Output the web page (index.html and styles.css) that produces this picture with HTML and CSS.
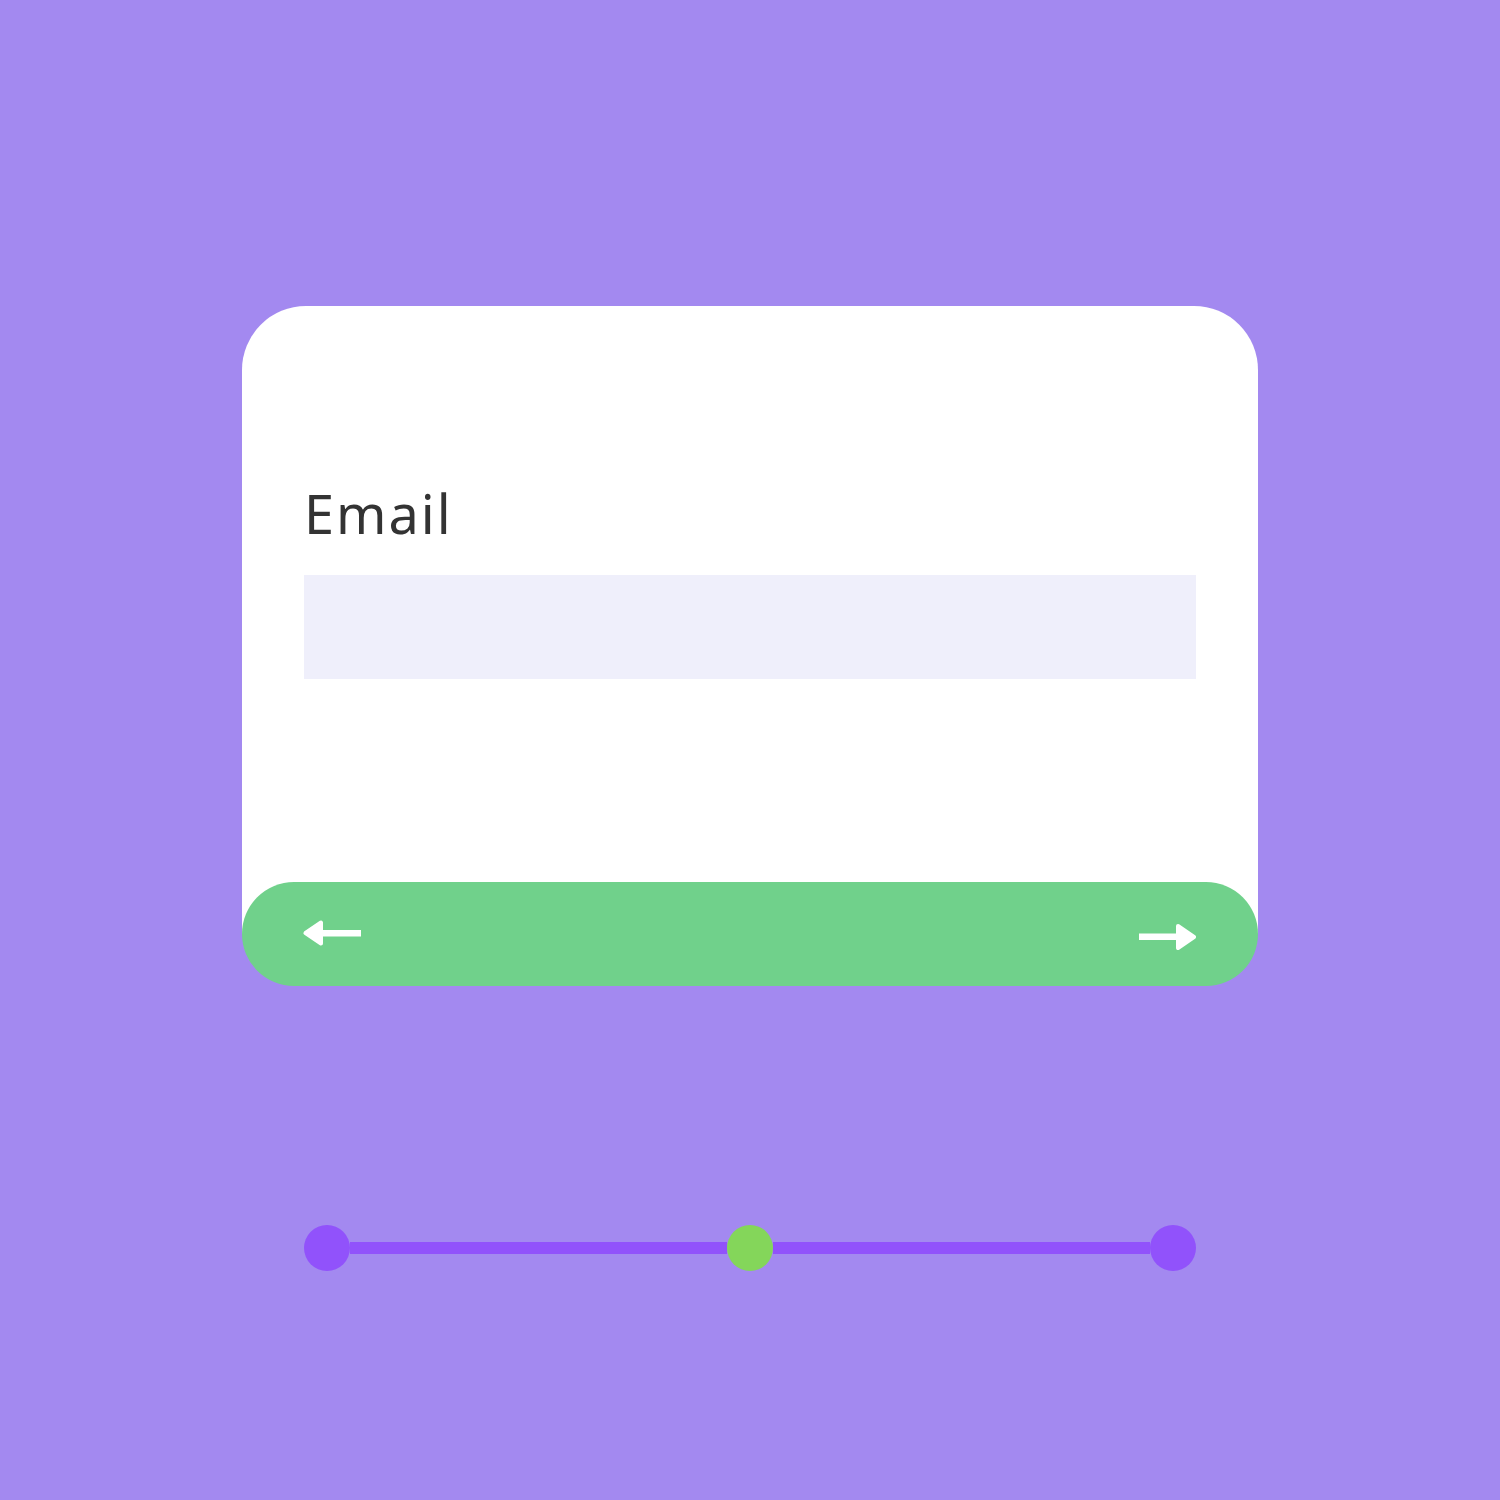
FILE: index.html
```html
<!DOCTYPE html>
<html lang="en">
<head>
<meta charset="utf-8">
<title>Email step</title>
<link rel="stylesheet" href="styles.css">
</head>
<body>
<main class="stage">
  <section class="card">
    <div class="card-body">
      <label class="field-label" for="email">Email</label>
      <div class="field-input" id="email"></div>
    </div>
    <div class="card-footer">
      <svg class="arrow arrow-left" width="58" height="30" viewBox="0 0 58 30" aria-hidden="true">
        <polygon points="2.5,15 18,4.5 18,25.5" fill="#fff" stroke="#fff" stroke-width="4" stroke-linejoin="round"/>
        <rect x="17" y="12" width="41" height="6.5" fill="#fff"/>
      </svg>
      <svg class="arrow arrow-right" width="58" height="30" viewBox="0 0 58 30" aria-hidden="true">
        <rect x="1" y="11.5" width="40" height="6.5" fill="#fff"/>
        <polygon points="40,4 56,15 40,26" fill="#fff" stroke="#fff" stroke-width="4" stroke-linejoin="round"/>
      </svg>
    </div>
  </section>
  <div class="slider">
    <span class="dot"></span>
    <span class="track"></span>
    <span class="dot dot-active"></span>
    <span class="track"></span>
    <span class="dot"></span>
  </div>
</main>
</body>
</html>
```

FILE: styles.css
```css
html, body {
  margin: 0;
  padding: 0;
  background: #a389f0;
}

body {
  width: 1500px;
  height: 1500px;
  overflow: hidden;
  font-family: "Noto Sans", "Open Sans", sans-serif;
}

.stage {
  padding: 306px 242px 0;
  display: flex;
  flex-direction: column;
}

.card {
  display: flex;
  flex-direction: column;
  border-radius: 64px 64px 0 0;
  background: linear-gradient(#ffffff calc(100% - 52px), transparent 0);
}

.card-body {
  display: flex;
  flex-direction: column;
  gap: 35px;
  padding: 180px 62px 203px;
}

.field-label {
  font-size: 54px;
  line-height: 1;
  letter-spacing: 2px;
  color: #333333;
  height: 54px;
}

.field-input {
  height: 104px;
  background: #efeffb;
}

.card-footer {
  height: 104px;
  border-radius: 52px;
  background: #70d18b;
  display: flex;
  justify-content: space-between;
  padding: 0 62px 0 61px;
}

.arrow {
  display: block;
}

.arrow-left {
  margin-top: 36px;
}

.arrow-right {
  margin-top: 40px;
}

.slider {
  margin: 239px 62px 0;
  height: 46px;
  display: flex;
  align-items: center;
}

.dot {
  width: 46px;
  height: 46px;
  border-radius: 50%;
  background: #9152fb;
  flex: none;
}

.dot-active {
  background: #84d65a;
}

.track {
  flex: 1;
  height: 12px;
  background: #9152fb;
}
```
